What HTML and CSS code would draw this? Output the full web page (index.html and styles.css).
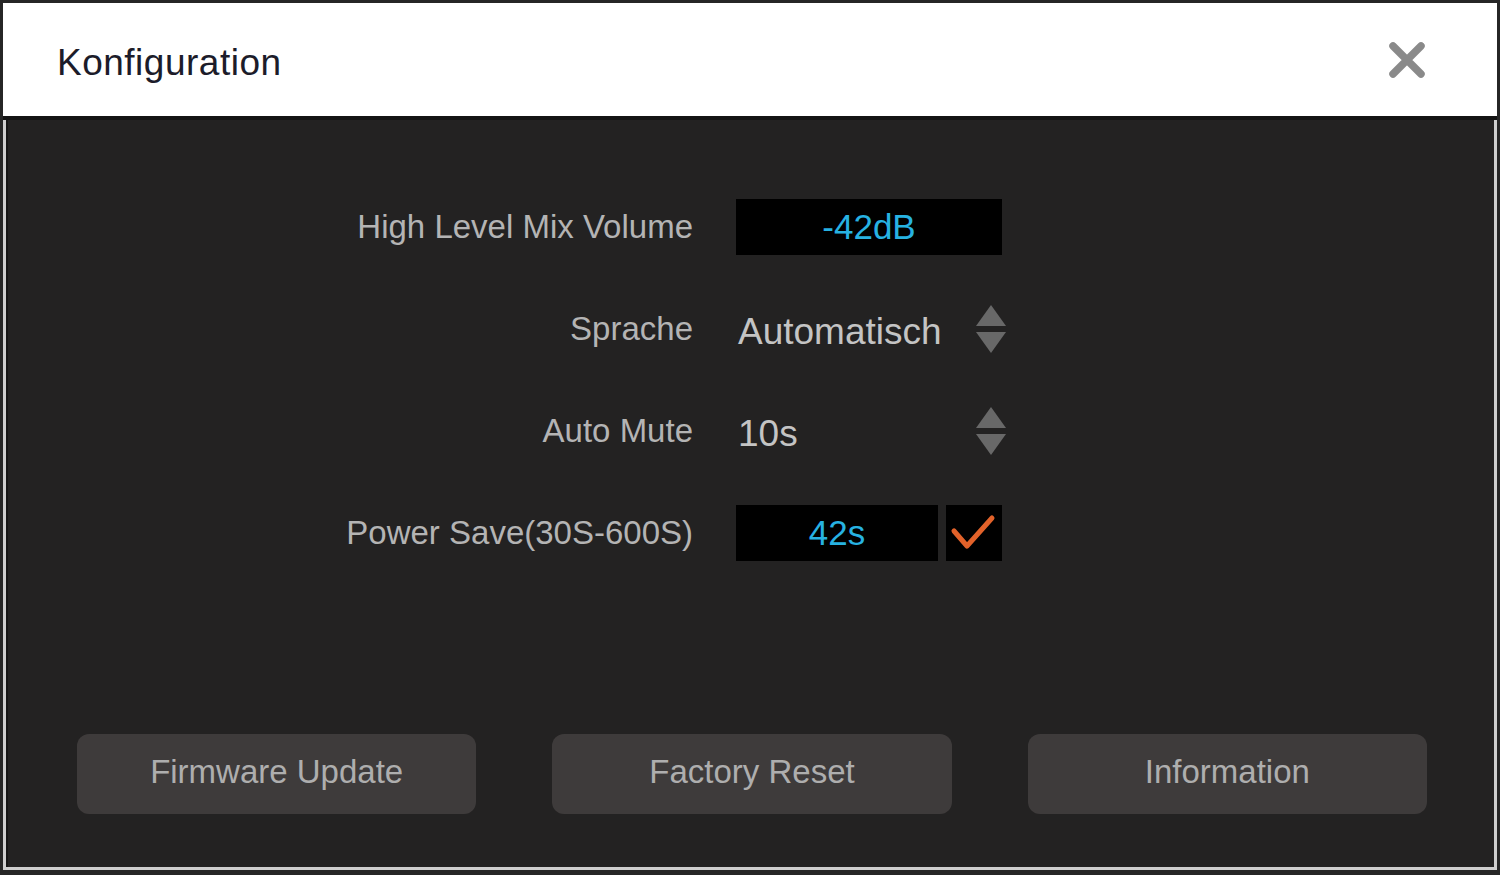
FILE: index.html
```html
<!DOCTYPE html>
<html lang="de">
<head>
<meta charset="utf-8">
<title>Konfiguration</title>
<link rel="stylesheet" href="styles.css">
</head>
<body>
<div class="dialog">
  <header class="titlebar">
    <h1 class="title">Konfiguration</h1>
    <button class="close" aria-label="Schließen">
      <svg width="40" height="40" viewBox="0 0 40 40"><path d="M6 6 L34 34 M34 6 L6 34" stroke="#8a8a8a" stroke-width="7.5" stroke-linecap="round" fill="none"/></svg>
    </button>
  </header>
  <main class="content">
    <div class="form">
      <div class="label">High Level Mix Volume</div>
      <div class="control"><div class="display wide">-42dB</div></div>

      <div class="label">Sprache</div>
      <div class="control spin">
        <span class="value">Automatisch</span>
        <span class="arrows"><span class="up"></span><span class="down"></span></span>
      </div>

      <div class="label">Auto Mute</div>
      <div class="control spin">
        <span class="value">10s</span>
        <span class="arrows"><span class="up"></span><span class="down"></span></span>
      </div>

      <div class="label">Power Save(30S-600S)</div>
      <div class="control pair">
        <div class="display narrow">42s</div>
        <div class="check">
          <svg width="56" height="56" viewBox="0 0 56 56"><path d="M8 26 L21 41 L46 13" stroke="#e2622a" stroke-width="5" stroke-linecap="round" stroke-linejoin="round" fill="none"/></svg>
        </div>
      </div>
    </div>
    <div class="buttons">
      <button class="btn">Firmware Update</button>
      <button class="btn">Factory Reset</button>
      <button class="btn">Information</button>
    </div>
  </main>
</div>
</body>
</html>
```
FILE: styles.css
```css
html, body {
  margin: 0;
  padding: 0;
  background: #262626;
  width: 1500px;
  height: 875px;
  overflow: hidden;
  font-family: "Liberation Sans", Arial, sans-serif;
}
.dialog {
  margin: 3px 0 0 3px;
  width: 1494px;
  height: 867px;
  box-sizing: border-box;
  border: 3px solid #cfcfcf;
  border-top: none;
  display: flex;
  flex-direction: column;
  background: #232222;
}
.titlebar {
  height: 113px;
  background: #ffffff;
  display: flex;
  align-items: center;
  justify-content: space-between;
  border-bottom: 4px solid #141414;
  margin: 0 -3px;
  padding-left: 54px;
  padding-right: 70px;
}
.title {
  margin: 6px 0 0 0;
  font-weight: normal;
  font-size: 37px;
  color: #1c1c2a;
  letter-spacing: 0.5px;
}
.close {
  background: none;
  border: none;
  padding: 0;
  width: 40px;
  height: 40px;
  margin-top: 0;
}
.close svg { display: block; }
.content {
  flex: 1;
  display: flex;
  flex-direction: column;
  padding: 79px 67px 53px 69px;
  border-left: 2px solid #161616;
}
.form {
  display: grid;
  grid-template-columns: 400px 270px;
  grid-auto-rows: 56px;
  column-gap: 43px;
  row-gap: 46px;
  margin-left: 216px;
}
.label {
  display: flex;
  align-items: center;
  justify-content: flex-end;
  font-size: 33px;
  color: #b4b4b4;
  white-space: nowrap;
}
.control {
  display: flex;
  align-items: center;
}
.display {
  background: #000;
  height: 56px;
  display: flex;
  align-items: center;
  justify-content: center;
  color: #27b2e2;
  font-size: 35px;
}
.wide { width: 266px; }
.narrow { width: 202px; }
.pair { gap: 8px; }
.check {
  width: 56px;
  height: 56px;
  background: #000;
}
.check svg { display: block; }
.spin {
  justify-content: space-between;
  width: 270px;
  padding-left: 2px;
  box-sizing: border-box;
}
.value {
  font-size: 37px;
  color: #c4c4c4;
  margin-top: 6px;
}
.arrows {
  display: flex;
  flex-direction: column;
  gap: 6px;
}
.up, .down {
  width: 0;
  height: 0;
  border-left: 15px solid transparent;
  border-right: 15px solid transparent;
}
.up { border-bottom: 21px solid #686868; }
.down { border-top: 21px solid #686868; }
.buttons {
  margin-top: auto;
  display: flex;
  gap: 76px;
}
.btn {
  width: 400px;
  height: 80px;
  border: none;
  border-radius: 12px;
  background: #3e3b3b;
  color: #aeaeae;
  font-family: "Liberation Sans", Arial, sans-serif;
  font-size: 33px;
  padding: 0 0 4px 0;
}
```
